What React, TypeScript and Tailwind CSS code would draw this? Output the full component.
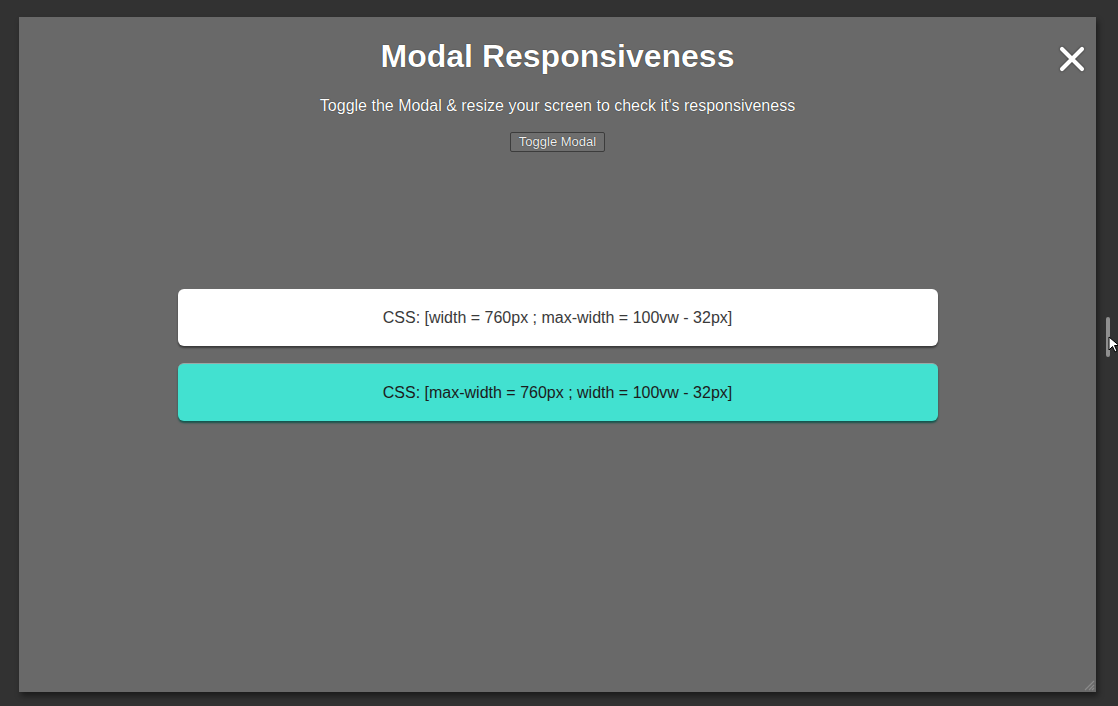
import React from 'react'

const font = { fontFamily: '"Liberation Sans", Arial, sans-serif' }

const CloseIcon = () => (
    <svg width="26" height="26" viewBox="0 0 26 26" className="drop-shadow-[0_0_1px_rgba(0,0,0,0.6)]">
        <path d="M3 3 L23 23 M23 3 L3 23" stroke="#ffffff" strokeWidth="4.2" strokeLinecap="round" />
    </svg>
)

const ResizeGrip = () => (
    <svg width="14" height="14" viewBox="0 0 14 14">
        <path d="M13 4 L4 13 M13 8 L8 13 M13 11 L11 13" stroke="#8a8a8a" strokeWidth="1.2" />
    </svg>
)

const Cursor = () => (
    <svg width="12" height="18" viewBox="0 0 12 18">
        <path d="M1 1 L1 14 L4.5 10.5 L7 16 L9 15 L6.5 9.5 L11 9.5 Z" fill="#ffffff" stroke="#000000" strokeWidth="1" />
    </svg>
)

const App = () => {
    return (
        <main className="w-full h-screen bg-[#323232] flex pt-[17px] pl-[19px] pr-[22px] pb-[14px] relative overflow-hidden" style={font}>
            <div className="relative flex-1 bg-[#696969] shadow-[2px_4px_6px_rgba(0,0,0,0.45)] flex flex-col items-center pt-[21px]">
                <h1 className="text-[32px] leading-[37px] font-bold text-white [text-shadow:0_0_1px_#000]">Modal Responsiveness</h1>
                <p className="mt-[22px] text-[16px] leading-[18px] text-white [text-shadow:0_0_1px_#000]">
                    Toggle the Modal &amp; resize your screen to check it's responsiveness
                </p>
                <button className="mt-[17px] h-[20px] px-[8px] text-[13px] leading-[16px] text-[#f2f2f2] bg-[#6e6e6e] border border-[#3c3c3c] rounded-[2px] [text-shadow:0_0_1px_#000]">
                    Toggle Modal
                </button>

                <button className="absolute top-[29px] right-[11px]">
                    <CloseIcon />
                </button>

                <div className="absolute inset-0 flex flex-col items-center justify-center gap-[17px] pt-[1px]">
                    <div className="w-[760px] h-[57px] bg-white rounded-[6px] shadow-[0_2px_2px_rgba(0,0,0,0.45)] flex items-center justify-center">
                        <span className="text-[16px] text-[#3a3a3a]">CSS: [width = 760px ; max-width = 100vw - 32px]</span>
                    </div>
                    <div className="w-[760px] h-[58px] bg-[#42e1d0] rounded-[6px] border-t border-[#9aa9a7] shadow-[0_2px_2px_rgba(0,80,70,0.8)] flex items-center justify-center">
                        <span className="text-[16px] text-[#1c1c1c]">CSS: [max-width = 760px ; width = 100vw - 32px]</span>
                    </div>
                </div>

                <div className="absolute right-[1px] bottom-[1px] leading-none">
                    <ResizeGrip />
                </div>
            </div>

            <div className="absolute top-[317px] right-[8px] w-[4px] h-[40px] rounded-full bg-[#8f8f8f]" />
            <div className="absolute top-[336px] right-[-2px] leading-none">
                <Cursor />
            </div>
        </main>
    )
}

export default App
